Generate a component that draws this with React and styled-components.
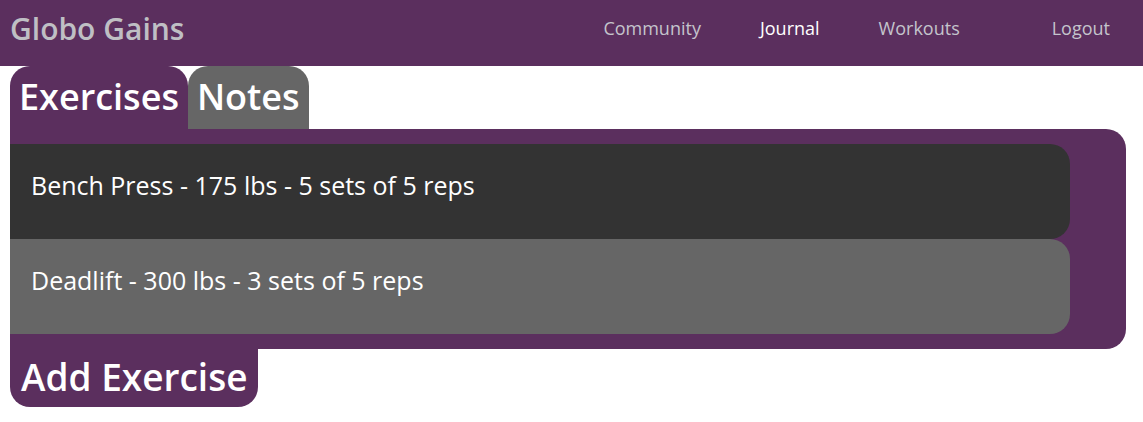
import React from 'react';
import styled, { createGlobalStyle } from 'styled-components';

const purple = '#5b2f5e';

const GlobalStyle = createGlobalStyle`
  body {
    margin: 0;
    background: #fff;
    font-family: "Open Sans", "Noto Sans", sans-serif;
  }
`;

const NavBar = styled.nav`
  display: flex;
  align-items: center;
  justify-content: space-between;
  height: 66px;
  padding: 0 33px 10px 10px;
  box-sizing: border-box;
  background: ${purple};
`;

const Brand = styled.div`
  font-size: 30px;
  font-weight: 600;
  color: #bfbfc4;
`;

const Links = styled.div`
  display: flex;
  align-items: center;
  gap: 59px;
`;

const NavLink = styled.a`
  font-size: 18px;
  color: ${(p) => (p.$active ? '#fff' : '#c4c4cc')};
  text-decoration: none;
  margin-left: ${(p) => (p.$push ? '33px' : '0')};
`;

const Main = styled.main`
  padding: 0 10px;
`;

const Tabs = styled.div`
  display: flex;
`;

const Tab = styled.div`
  display: flex;
  align-items: center;
  height: 63px;
  padding: 0 9px 2px;
  box-sizing: border-box;
  border-radius: 20px 20px 0 0;
  background: ${(p) => (p.$active ? purple : '#666')};
  color: #fff;
  font-size: 36px;
  font-weight: 600;
`;

const Panel = styled.section`
  width: 1116px;
  padding: 15px 56px 15px 0;
  box-sizing: border-box;
  background: ${purple};
  border-radius: 0 20px 20px 0;
`;

const Row = styled.div`
  display: flex;
  align-items: center;
  height: 95px;
  padding: 0 21px 14px;
  box-sizing: border-box;
  background: ${(p) => (p.$dark ? '#333' : '#666')};
  border-radius: 0 20px 20px 0;
  color: #fff;
  font-size: 25px;
`;

const AddButton = styled.button`
  display: block;
  height: 58px;
  padding: 0 11px 4px;
  border: none;
  border-radius: 0 0 20px 20px;
  background: ${purple};
  color: #fff;
  font-family: inherit;
  font-size: 37px;
  font-weight: 600;
  cursor: pointer;
`;

const exercises = [
  { name: 'Bench Press', weight: 175, sets: 5, reps: 5 },
  { name: 'Deadlift', weight: 300, sets: 3, reps: 5 },
];

const App = () => {
  return (
    <>
      <GlobalStyle />
      <NavBar>
        <Brand>Globo Gains</Brand>
        <Links>
          <NavLink>Community</NavLink>
          <NavLink $active>Journal</NavLink>
          <NavLink>Workouts</NavLink>
          <NavLink $push>Logout</NavLink>
        </Links>
      </NavBar>
      <Main>
        <Tabs>
          <Tab $active>Exercises</Tab>
          <Tab>Notes</Tab>
        </Tabs>
        <Panel>
          {exercises.map((ex, i) => (
            <Row key={ex.name} $dark={i % 2 === 0}>
              {ex.name} - {ex.weight} lbs - {ex.sets} sets of {ex.reps} reps
            </Row>
          ))}
        </Panel>
        <AddButton>Add Exercise</AddButton>
      </Main>
    </>
  );
};

export default App;
